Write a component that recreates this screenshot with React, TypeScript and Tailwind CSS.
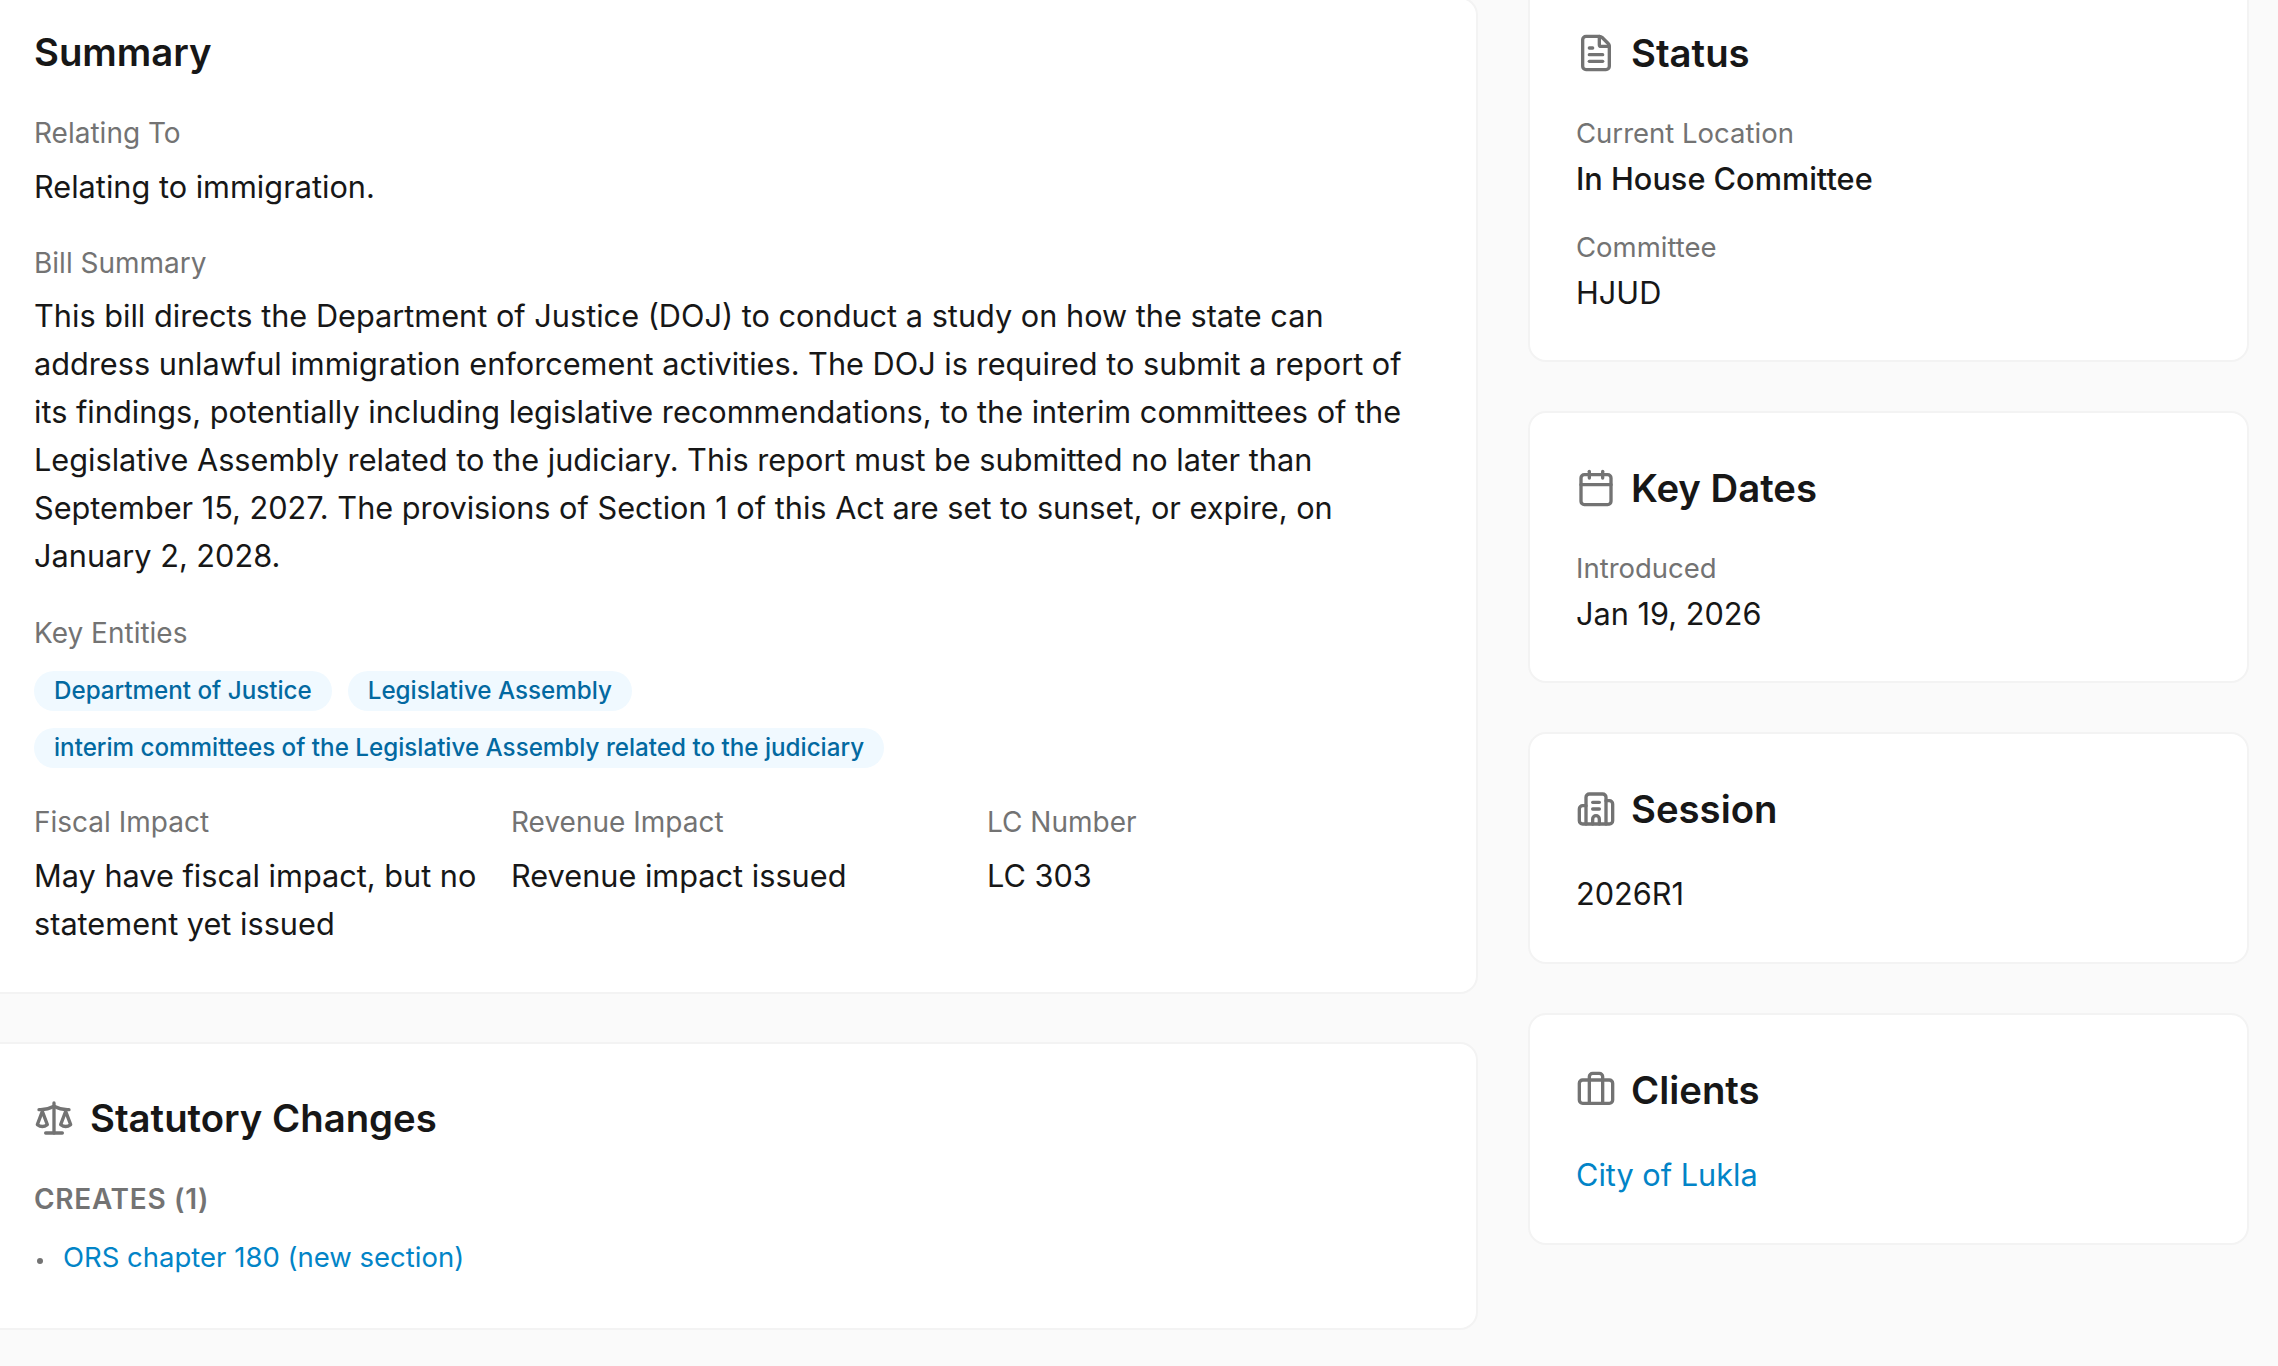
import { Briefcase, Building2, Calendar, FileText, Scale } from "lucide-react";
import type { ReactNode } from "react";

function Label({ children }: { children: ReactNode }) {
  return <p className="text-[28px] leading-[40px] text-[#737373]">{children}</p>;
}

function SideLabel({ children }: { children: ReactNode }) {
  return <p className="text-[27.5px] leading-[40px] text-[#737373]">{children}</p>;
}

function Chip({ children }: { children: ReactNode }) {
  return (
    <span className="rounded-full bg-[#f0f9ff] px-[20px] text-[24.2px] leading-[40px] font-medium text-[#0369a1]">
      {children}
    </span>
  );
}

function SideCard({ icon, title, children }: { icon: ReactNode; title: string; children: ReactNode }) {
  return (
    <section className="rounded-[18px] border-2 border-[#f3f3f3] bg-white px-[46px] pt-[51px] pb-[44px]">
      <div className="flex items-center gap-[15px] text-[#737373]">
        {icon}
        <h2 className="text-[38.3px] leading-[48px] font-semibold text-[#171717]">{title}</h2>
      </div>
      {children}
    </section>
  );
}

export default function App() {
  return (
    <main className="h-screen w-full overflow-hidden bg-[#fafafa] font-['Inter',sans-serif] text-[#171717]">
      <div className="-mt-[3px] -ml-[20px] grid grid-cols-[1498px_721px] gap-[50px]">
        <div className="flex flex-col gap-[48px]">
          <section className="rounded-[18px] border-2 border-[#f3f3f3] bg-white pt-[29px] pr-[35px] pb-[44px] pl-[52px]">
            <h2 className="text-[38.3px] leading-[48px] font-semibold">Summary</h2>

            <div className="mt-[37px]">
              <Label>Relating To</Label>
              <p className="mt-[10px] text-[30.7px] leading-[48px]">Relating to immigration.</p>
            </div>

            <div className="mt-[32px]">
              <Label>Bill Summary</Label>
              <p className="mt-[9px] text-[30.7px] leading-[48px]">
                This bill directs the Department of Justice (DOJ) to conduct a study on how the state can address unlawful immigration enforcement activities. The DOJ is required to submit a report of its findings, potentially including legislative recommendations, to the interim committees of the Legislative Assembly related to the judiciary. This report must be submitted no later than September 15, 2027. The provisions of Section 1 of this Act are set to sunset, or expire, on January 2, 2028.
              </p>
            </div>

            <div className="mt-[33px]">
              <Label>Key Entities</Label>
              <div className="mt-[18px] flex flex-wrap gap-x-[16px] gap-y-[17px]">
                <Chip>Department of Justice</Chip>
                <Chip>Legislative Assembly</Chip>
                <Chip>interim committees of the Legislative Assembly related to the judiciary</Chip>
              </div>
            </div>

            <div className="mt-[34px] grid grid-cols-[477px_476px_1fr]">
              <div className="pr-[20px]">
                <Label>Fiscal Impact</Label>
                <p className="mt-[10px] text-[30.7px] leading-[48px]">May have fiscal impact, but no statement yet issued</p>
              </div>
              <div>
                <Label>Revenue Impact</Label>
                <p className="mt-[10px] text-[30.7px] leading-[48px]">Revenue impact issued</p>
              </div>
              <div>
                <Label>LC Number</Label>
                <p className="mt-[10px] text-[30.7px] leading-[48px]">LC 303</p>
              </div>
            </div>
          </section>

          <section className="rounded-[18px] border-2 border-[#f3f3f3] bg-white pt-[50px] pr-[35px] pb-[51px] pl-[52px]">
            <div className="flex items-center gap-[16px] text-[#737373]">
              <Scale size={40} strokeWidth={2} />
              <h2 className="text-[38.3px] leading-[48px] font-semibold text-[#171717]">Statutory Changes</h2>
            </div>
            <p className="mt-[37px] text-[28px] leading-[40px] font-semibold tracking-[0.7px] text-[#737373]">CREATES (1)</p>
            <ul className="mt-[18px]">
              <li className="flex items-center gap-[20px] text-[27.5px] leading-[40px]">
                <span className="mt-[7px] ml-[3px] h-[6px] w-[6px] rounded-full bg-[#737373]" />
                <a className="text-[#0284c7]">ORS chapter 180 (new section)</a>
              </li>
            </ul>
          </section>
        </div>

        <div className="-mt-[21px] flex flex-col gap-[49px]">
          <SideCard icon={<FileText size={40} strokeWidth={2} />} title="Status">
            <div className="mt-[36px]">
              <SideLabel>Current Location</SideLabel>
              <p className="mt-[3px] text-[30.7px] leading-[46px] font-medium">In House Committee</p>
            </div>
            <div className="mt-[25px]">
              <SideLabel>Committee</SideLabel>
              <p className="mt-[3px] text-[30.7px] leading-[46px]">HJUD</p>
            </div>
          </SideCard>
          <SideCard icon={<Calendar size={40} strokeWidth={2} />} title="Key Dates">
            <div className="mt-[36px]">
              <SideLabel>Introduced</SideLabel>
              <p className="mt-[3px] text-[30.7px] leading-[46px]">Jan 19, 2026</p>
            </div>
          </SideCard>
          <SideCard icon={<Building2 size={40} strokeWidth={2} />} title="Session">
            <p className="mt-[36px] text-[30.7px] leading-[49px]">2026R1</p>
          </SideCard>
          <SideCard icon={<Briefcase size={40} strokeWidth={2} />} title="Clients">
            <a className="mt-[36px] block text-[30.7px] leading-[49px] text-[#0284c7]">City of Lukla</a>
          </SideCard>
        </div>
      </div>
    </main>
  );
}
